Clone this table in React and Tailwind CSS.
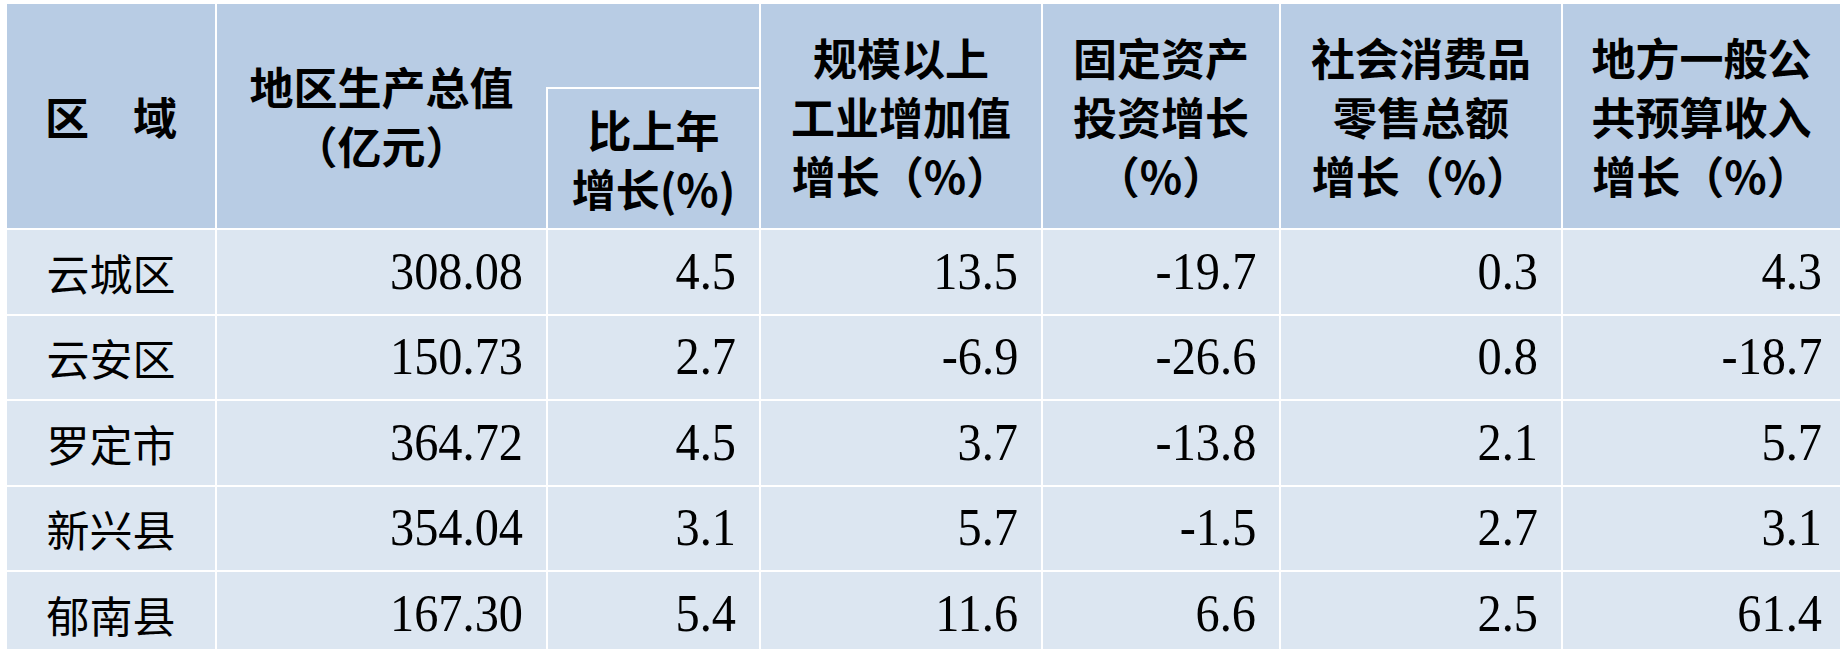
import React from "react";

const heads = [
  ["规模以上", "工业增加值", "增长（%）"],
  ["固定资产", "投资增长", "（%）"],
  ["社会消费品", "零售总额", "增长（%）"],
  ["地方一般公", "共预算收入", "增长（%）"],
];

const data = [
  ["云城区", "308.08", "4.5", "13.5", "-19.7", "0.3", "4.3"],
  ["云安区", "150.73", "2.7", "-6.9", "-26.6", "0.8", "-18.7"],
  ["罗定市", "364.72", "4.5", "3.7", "-13.8", "2.1", "5.7"],
  ["新兴县", "354.04", "3.1", "5.7", "-1.5", "2.7", "3.1"],
  ["郁南县", "167.30", "5.4", "11.6", "6.6", "2.5", "61.4"],
];

const App = () => {
  return (
    <div className="w-[1840px] h-[649px] overflow-hidden bg-white pl-[7px] pt-[4px] text-black font-['Noto_Sans_CJK_SC','Noto_Sans',sans-serif]">
      <div className="grid grid-cols-[208px_329px_211px_280px_236px_280px_1fr] grid-rows-[224px_repeat(5,83.5px)] gap-[2px] bg-white">
        {/* header */}
        <div className="bg-[#b8cce4] flex items-center justify-center text-[44px] font-bold leading-[59px]">
          区　域
        </div>
        <div className="col-span-2 bg-[#b8cce4] flex">
          <div className="w-[329px] flex flex-col items-center justify-center text-[44px] font-bold leading-[59px]">
            <p>地区生产总值</p>
            <p>（亿元）</p>
          </div>
          <div className="flex-1 flex flex-col justify-end">
            <div className="h-[141px] border-t-2 border-l-2 border-white flex flex-col items-center justify-center text-[44px] font-bold leading-[59px]">
              <p>比上年</p>
              <p>增长(%)</p>
            </div>
          </div>
        </div>
        {heads.map((h, i) => (
          <div
            key={i}
            className="bg-[#b8cce4] flex flex-col items-center justify-center text-[44px] font-bold leading-[59px] whitespace-nowrap"
          >
            {h.map((l) => (
              <p key={l}>{l}</p>
            ))}
          </div>
        ))}

        {/* body */}
        {data.map((r) => (
          <React.Fragment key={r[0]}>
            <div className="bg-[#dce6f1] flex items-center justify-center text-[43px]">
              {r[0]}
            </div>
            {r.slice(1).map((v, j) => (
              <div
                key={j}
                className={`bg-[#dce6f1] flex items-center justify-end text-[52px] font-['Liberation_Serif','Times_New_Roman',serif] ${
                  j === 5 ? "pr-[18px]" : "pr-[23px]"
                }`}
              >
                <span className="inline-block origin-right scale-x-[0.93]">{v}</span>
              </div>
            ))}
          </React.Fragment>
        ))}
      </div>
    </div>
  );
};

export default App;
